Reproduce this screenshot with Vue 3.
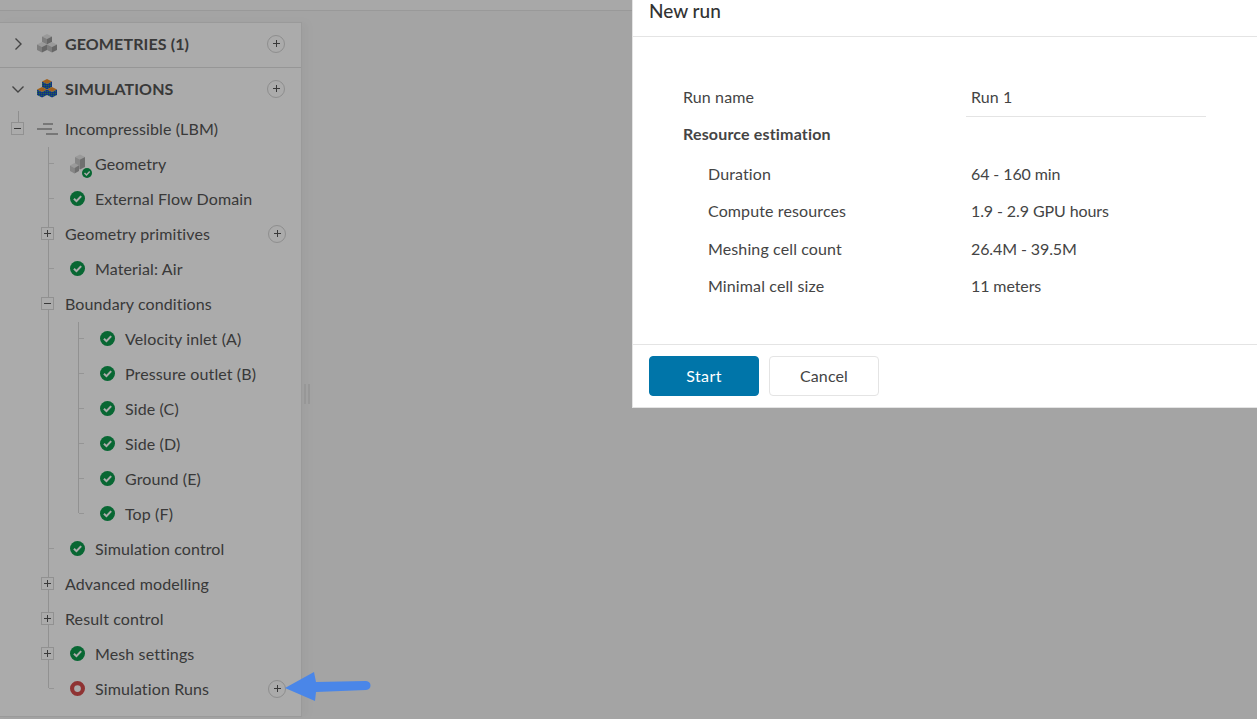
<template>
  <div class="page">
    <div class="topbar"></div>
    <div class="workspace">
      <aside class="panel">
        <div class="section">
          <svg class="chev" viewBox="0 0 14 14"><path d="M4.500 1.500 10 7l-5.500 5.500" /></svg>
          <svg class="cubes" viewBox="0 0 20 20">
            <g v-for="c in cubePos" :key="c" :transform="c">
              <path d="M5 0l5 2.500L5 5 0 2.500z" fill="#e6e6e6" />
              <path d="M0 2.500 5 5v5.500L0 8z" fill="#bcbcbc" />
              <path d="M10 2.500 5 5v5.500L10 8z" fill="#9a9a9a" />
            </g>
          </svg>
          <span class="section-title">GEOMETRIES (1)</span>
          <span class="plus"></span>
        </div>
        <div class="section">
          <svg class="chev" viewBox="0 0 14 14"><path d="M1.500 4.500 7 10l5.500-5.500" /></svg>
          <svg class="cubes" viewBox="0 0 20 20">
            <defs>
              <pattern id="speckle" width="2" height="2" patternUnits="userSpaceOnUse">
                <rect width="2" height="2" fill="#1a4fc0" />
                <rect width="1" height="1" fill="#3fa35a" />
              </pattern>
            </defs>
            <g v-for="c in cubePos" :key="c" :transform="c">
              <path d="M5 0l5 2.500L5 5 0 2.500z" fill="#ee8f2c" />
              <path d="M0 2.500 5 5v5.500L0 8z" fill="url(#speckle)" />
              <path d="M10 2.500 5 5v5.500L10 8z" fill="url(#speckle)" />
            </g>
          </svg>
          <span class="section-title">SIMULATIONS</span>
          <span class="plus"></span>
        </div>

        <div class="tree">
          <div class="row root">
            <span class="toggle minus"></span>
            <svg class="solver" viewBox="0 0 21 12"><path d="M6 1h10M0 6h15M9 11h12" /></svg>
            <span class="label">Incompressible (LBM)</span>
          </div>
          <div class="branch">
            <template v-for="item in tree" :key="item.name">
              <div class="row" :class="{ tick: item.icon }">
                <span v-if="item.toggle" class="toggle" :class="item.toggle"></span>
                <svg v-if="item.icon === 'geo'" class="geo" viewBox="0 0 24 28">
                  <path d="M6 7l5-2.500 5 2.500-5 2.500z" fill="#e6e6e6" />
                  <path d="M6 7l5 2.500v10L6 17z" fill="#c8c8c8" />
                  <path d="M16 7l-5 2.500v10l5-2.500z" fill="#a6a6a6" />
                  <path d="M1 15.500 5.500 13l4.500 2.500L5.500 18z" fill="#e6e6e6" />
                  <path d="M1 15.500 5.500 18v5.500L1 21z" fill="#c8c8c8" />
                  <path d="M10 15.500 5.500 18v5.500l4.500-2.500z" fill="#a6a6a6" />
                  <circle cx="18" cy="23" r="5" fill="#0c9a4c" />
                  <path d="M15.500 23l2 2 3.200-3.500" class="check-mark small" />
                </svg>
                <svg v-else-if="item.icon === 'ok'" class="status" viewBox="0 0 16 16">
                  <circle cx="8" cy="8" r="8" fill="#0c9a4c" />
                  <path d="M4.200 8.200l2.700 2.600 5-5.300" class="check-mark" />
                </svg>
                <svg v-else-if="item.icon === 'run'" class="status" viewBox="0 0 16 16">
                  <circle cx="8" cy="8" r="5.800" fill="none" stroke="#d54c4c" stroke-width="4.400" />
                </svg>
                <span class="label" :class="{ offset: item.icon }">{{ item.name }}</span>
                <span v-if="item.plus" class="plus"></span>
              </div>
              <div v-if="item.children" class="branch nested">
                <div v-for="child in item.children" :key="child" class="row tick">
                  <svg class="status" viewBox="0 0 16 16">
                    <circle cx="8" cy="8" r="8" fill="#0c9a4c" />
                    <path d="M4.200 8.200l2.700 2.600 5-5.300" class="check-mark" />
                  </svg>
                  <span class="label offset">{{ child }}</span>
                </div>
              </div>
            </template>
          </div>
        </div>
      </aside>
      <div class="handle"></div>
    </div>

    <div class="overlay"></div>

    <div class="modal">
      <div class="modal-head">New run</div>
      <div class="modal-body">
        <div class="field first">
          <span>Run name</span>
          <span class="input">Run 1</span>
        </div>
        <div class="heading">Resource estimation</div>
        <div v-for="r in resources" :key="r.label" class="field sub">
          <span>{{ r.label }}</span>
          <span class="value">{{ r.value }}</span>
        </div>
      </div>
      <div class="modal-foot">
        <button class="btn primary">Start</button>
        <button class="btn">Cancel</button>
      </div>
    </div>

    <svg class="arrow" viewBox="0 0 90 32" width="90" height="32">
      <path d="M1 17 30 1l2 10 50-1c6 0 6 9 0 9l-50 2-1 9z" fill="#4a86e8" />
    </svg>
  </div>
</template>

<script setup>
const cubePos = ["translate(5 0)", "translate(0 8)", "translate(10 8)"];

const tree = [
  { name: "Geometry", icon: "geo" },
  { name: "External Flow Domain", icon: "ok" },
  { name: "Geometry primitives", toggle: "closed", plus: true },
  { name: "Material: Air", icon: "ok" },
  {
    name: "Boundary conditions",
    toggle: "minus",
    children: [
      "Velocity inlet (A)",
      "Pressure outlet (B)",
      "Side (C)",
      "Side (D)",
      "Ground (E)",
      "Top (F)",
    ],
  },
  { name: "Simulation control", icon: "ok" },
  { name: "Advanced modelling", toggle: "closed" },
  { name: "Result control", toggle: "closed" },
  { name: "Mesh settings", icon: "ok", toggle: "closed" },
  { name: "Simulation Runs", icon: "run", plus: true },
];

const resources = [
  { label: "Duration", value: "64 - 160 min" },
  { label: "Compute resources", value: "1.9 - 2.9 GPU hours" },
  { label: "Meshing cell count", value: "26.4M - 39.5M" },
  { label: "Minimal cell size", value: "11 meters" },
];
</script>

<style scoped>
.page {
  position: relative;
  height: 719px;
  overflow: hidden;
  background: #f5f5f5;
  font-family: Lato, "Open Sans", sans-serif;
  font-size: 16px;
  letter-spacing: 0.12px;
  color: #555;
}

.topbar {
  height: 10px;
  background: #fbfbfb;
  border-bottom: 1px solid #e4e4e4;
}

.workspace {
  display: flex;
  padding-top: 11px;
}

/* tree panel */
.panel {
  width: 302px;
  height: 695px;
  box-sizing: border-box;
  background: #fff;
  border: 1px solid #e6e6e6;
  border-left: 0;
  box-shadow: 6px 0 8px rgba(0, 0, 0, 0.03);
}

.section {
  display: flex;
  align-items: center;
  box-sizing: border-box;
  height: 45px;
  padding: 0 1px 3px 11px;
  border-bottom: 1px solid #e0e0e0;
}

.section:nth-child(2) {
  height: 43px;
  padding-bottom: 2px;
  border-bottom: 0;
}

.chev {
  width: 14px;
  height: 14px;
  margin-right: 12px;
  fill: none;
  stroke: #666;
  stroke-width: 1.400;
}

.cubes {
  width: 20px;
  height: 20px;
  margin-right: 8px;
}

.section-title {
  font-weight: 700;
  color: #555;
}

.plus {
  position: relative;
  width: 18px;
  height: 18px;
  margin-left: auto;
  margin-right: 15px;
  flex: none;
  border: 1px solid #d4d4d4;
  border-radius: 50%;
  box-sizing: border-box;
}

.plus::before,
.plus::after,
.toggle::before,
.toggle.closed::after {
  content: "";
  position: absolute;
  left: 50%;
  top: 50%;
  width: 7px;
  height: 1px;
  margin: -0.5px 0 0 -3.5px;
  background: #555;
}

.plus::after,
.toggle.closed::after {
  transform: rotate(90deg);
}

.row {
  position: relative;
  display: flex;
  align-items: center;
  height: 35px;
}

.root::before {
  content: "";
  position: absolute;
  left: 18px;
  top: 0;
  height: 11px;
  width: 1px;
  background: #d4d4d4;
}

.toggle {
  position: absolute;
  left: -7px;
  top: 11px;
  width: 13px;
  height: 13px;
  box-sizing: border-box;
  background: #fff;
  border: 1px solid #d8d8d8;
}

.root .toggle {
  left: 11px;
}

.solver {
  width: 21px;
  height: 12px;
  margin-left: 37px;
  margin-right: 7px;
  fill: none;
  stroke: #666;
  stroke-width: 1.200;
}

.root .label {
  margin-left: 0;
}

.branch {
  position: relative;
  margin-left: 48px;
}

.branch::before {
  content: "";
  position: absolute;
  left: 0;
  top: 1px;
  bottom: 18px;
  width: 1px;
  background: #d8d8d8;
}

.branch.nested {
  margin-left: 30px;
}

.tick::before {
  content: "";
  position: absolute;
  left: 1px;
  top: 17px;
  width: 5px;
  height: 1px;
  background: #dedede;
}

.label {
  margin-left: 17px;
  white-space: nowrap;
}

.label.offset {
  margin-left: 10px;
}

.status {
  width: 15px;
  height: 15px;
  margin-left: 22px;
  flex: none;
}

.geo {
  width: 24px;
  height: 28px;
  margin-left: 21px;
  margin-right: -8px;
  flex: none;
}

.check-mark {
  fill: none;
  stroke: #fff;
  stroke-width: 2.200;
}

.check-mark.small {
  stroke-width: 1.500;
}

.row .plus {
  margin-right: 15px;
}

.handle {
  width: 2px;
  height: 20px;
  margin: 362px 0 0 2px;
  background: #e2e2e2;
  box-shadow: 4px 0 0 #e2e2e2;
}

.overlay {
  position: absolute;
  inset: 0;
  background: rgba(0, 0, 0, 0.33);
}

/* dialog */
.modal {
  position: absolute;
  top: 0;
  right: 0;
  width: 625px;
  height: 408px;
  box-sizing: border-box;
  display: flex;
  flex-direction: column;
  background: #fff;
  border: 1px solid #e4e4e4;
  border-top: 0;
  border-right: 0;
  color: #444;
}

.modal-head {
  height: 36px;
  box-sizing: content-box;
  padding: 0 16px;
  border-bottom: 1px solid #e4e4e4;
  font-size: 19px;
  font-weight: 500;
  line-height: 21px;
  letter-spacing: 0;
  color: #333;
}

.modal-body {
  flex: 1;
  padding: 40px 50px 0;
}

.field {
  display: flex;
  align-items: center;
  height: 37.500px;
}

.field span:first-child {
  width: 288px;
  flex: none;
}

.field.first {
  height: 40px;
  padding-bottom: 1px;
  box-sizing: border-box;
}

.input {
  width: 240px;
  height: 39px;
  margin: 0 0 -1px -5px;
  line-height: 38px;
  padding-left: 5px;
  box-sizing: border-box;
  border-bottom: 1px solid #e4e4e4;
}

.value {
  letter-spacing: -0.1px;
}

.heading {
  height: 35px;
  line-height: 34px;
  font-weight: 700;
  margin-bottom: 3.500px;
  letter-spacing: 0.17px;
}

.field.sub {
  padding-left: 25px;
  position: relative;
  top: -1px;
}

.field.sub span:first-child {
  width: 263px;
}

.modal-foot {
  display: flex;
  gap: 10px;
  height: 51px;
  padding: 11px 16px 0;
  border-top: 1px solid #e4e4e4;
}

.btn {
  width: 110px;
  height: 40px;
  padding: 0 0 2px;
  font: inherit;
  letter-spacing: inherit;
  color: #444;
  background: #fff;
  border: 1px solid #e4e4e4;
  border-radius: 4px;
}

.btn.primary {
  background: #0075a9;
  border-color: #0075a9;
  color: #fff;
  letter-spacing: 0.4px;
}

.arrow {
  position: absolute;
  left: 284px;
  top: 671px;
}
</style>
